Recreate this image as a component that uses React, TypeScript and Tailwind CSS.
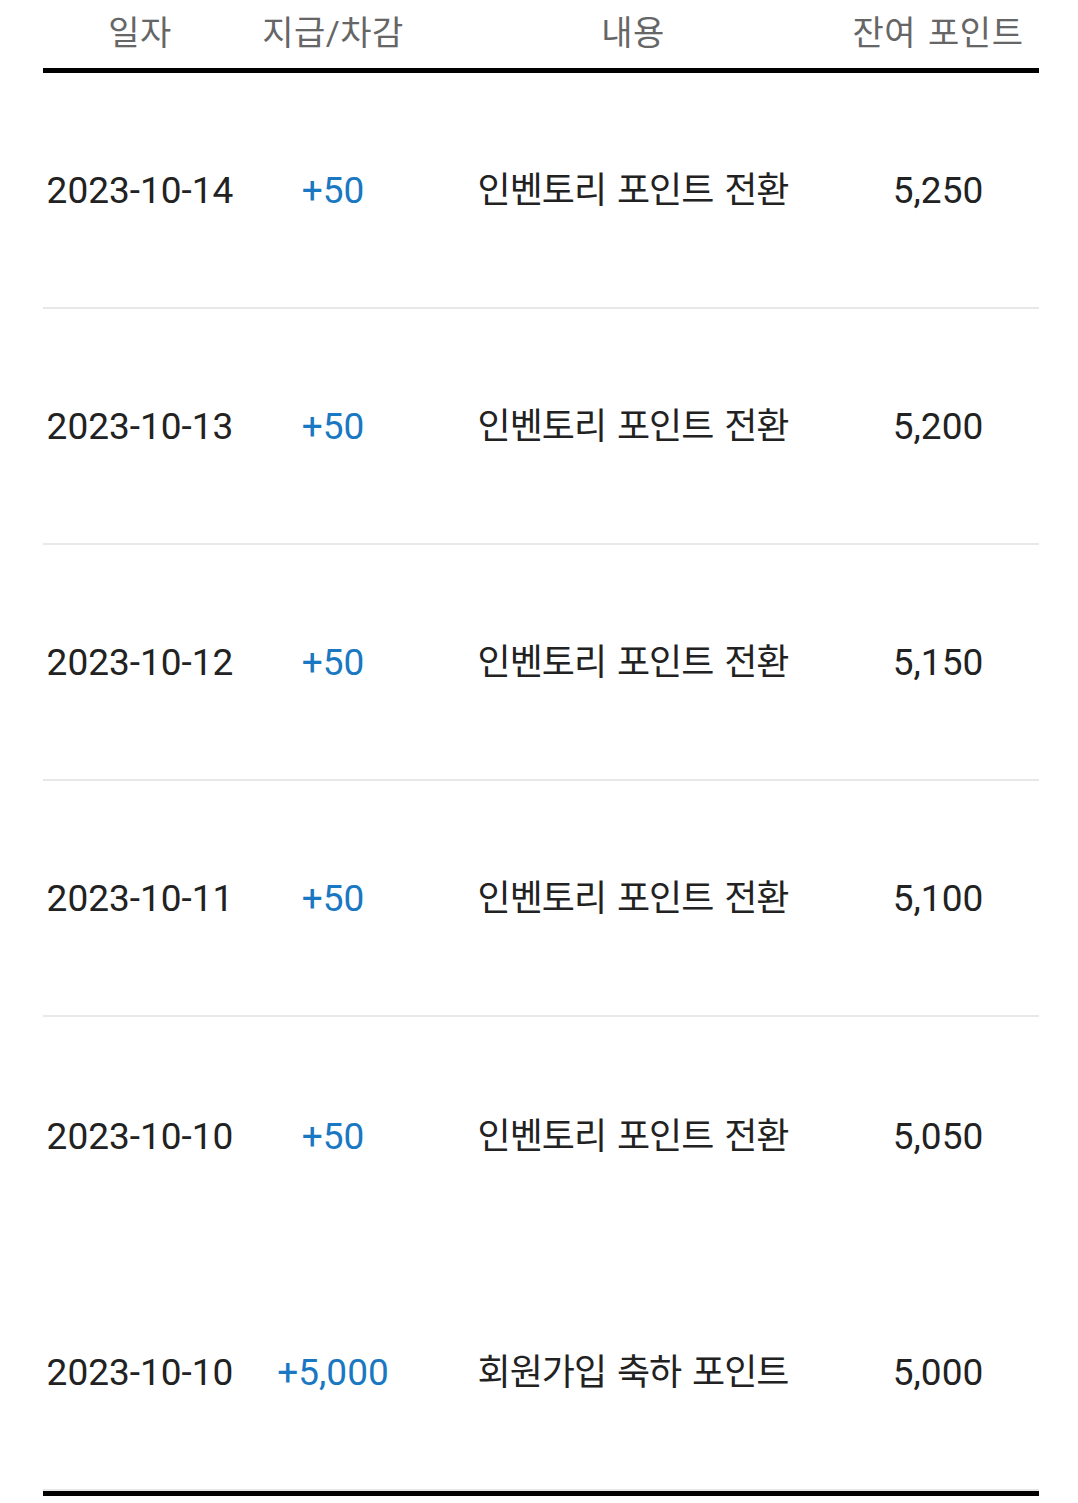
const rows = [
  { date: "2023-10-14", amount: "+50", desc: "인벤토리 포인트 전환", balance: "5,250", line: true },
  { date: "2023-10-13", amount: "+50", desc: "인벤토리 포인트 전환", balance: "5,200", line: true },
  { date: "2023-10-12", amount: "+50", desc: "인벤토리 포인트 전환", balance: "5,150", line: true },
  { date: "2023-10-11", amount: "+50", desc: "인벤토리 포인트 전환", balance: "5,100", line: true },
  { date: "2023-10-10", amount: "+50", desc: "인벤토리 포인트 전환", balance: "5,050", line: false },
  { date: "2023-10-10", amount: "+5,000", desc: "회원가입 축하 포인트", balance: "5,000", line: true },
];

const font = "font-['Roboto','Noto_Sans_CJK_KR',sans-serif]";

export default function App() {
  return (
    <div className={`min-h-screen w-full bg-white ${font}`}>
      <div className="ml-[43px] w-[996px]">
        {/* header */}
        <div className="flex h-[73px] items-center border-b-[5px] border-black pb-[2px] text-[34px] tracking-[0.5px] [word-spacing:3px] text-[#666666]">
          <div className="w-[194px] text-center">일자</div>
          <div className="w-[192px] text-center">지급/차감</div>
          <div className="w-[408px] text-center">내용</div>
          <div className="w-[202px] text-center">잔여 포인트</div>
        </div>

        {rows.map((r, i) => (
          <div
            key={i}
            className={`flex items-center pt-[2px] text-[37px] text-[#222222] ${
              r.line ? "h-[236px] border-b-2 border-[#e8e8e8]" : "h-[238px]"
            }`}
          >
            <div className="w-[194px] text-center">{r.date}</div>
            <div className="w-[192px] text-center text-[#1a78c2]">{r.amount}</div>
            <div className="w-[408px] text-center text-[36px] tracking-[-1px] [word-spacing:3px]">{r.desc}</div>
            <div className="w-[202px] text-center">{r.balance}</div>
          </div>
        ))}
        <div className="h-[5px] bg-black" />
      </div>
    </div>
  );
}
